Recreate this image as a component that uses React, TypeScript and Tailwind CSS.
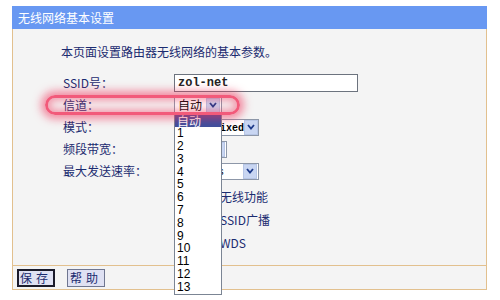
import React from 'react';

const cjk = "font-['Noto_Sans_CJK_SC',sans-serif]";
const mono = "font-['Liberation_Mono',monospace]";

function Arrow() {
  return (
    <span className="flex h-[15px] w-[14px] shrink-0 items-center justify-center border border-[#b7c6e6] bg-[#c9d6f2]">
      <svg width="8" height="6" viewBox="0 0 8 6">
        <path d="M1 1 L4 4.5 L7 1" fill="none" stroke="#1d3a8a" strokeWidth="1.8" />
      </svg>
    </span>
  );
}

function Select({ width, children }: { width: string; children?: React.ReactNode }) {
  return (
    <div className={`flex h-[17px] items-center justify-between border border-[#8d97a8] bg-white pl-[3px] pr-px ${width}`}>
      <span className="whitespace-nowrap leading-[14px]">{children}</span>
      <Arrow />
    </div>
  );
}

function Row({ label, children }: { label?: string; children?: React.ReactNode }) {
  return (
    <div className="flex h-[22px] items-center">
      <div className="w-[113px] pl-[2px] text-[#1b2b70]">{label}</div>
      <div className="flex items-center">{children}</div>
    </div>
  );
}

const channels = ['1', '2', '3', '4', '5', '6', '7', '8', '9', '10', '11', '12', '13'];

export default function App() {
  return (
    <div className={`relative h-[300px] w-[500px] overflow-hidden bg-white text-[12px] ${cjk}`}>
      <div className="ml-[12px] mt-[6px] w-[475px]">
        <div className="flex h-[23px] items-center bg-[#6898f2] pl-[6px] text-white">无线网络基本设置</div>
        <div className="h-[236px] border-x border-[#e2c08e] bg-[#f4f4f4]">
          <div className="pl-[48px] pt-[15px] leading-[16px] text-[#1b2b70]">本页面设置路由器无线网络的基本参数。</div>
          <div className="pl-[48px] pt-[12px]">
            <Row label="SSID号：">
              <div className={`flex h-[18px] w-[184px] items-center border border-[#6c737e] bg-white pl-[3px] ${mono} text-[12px] font-bold text-[#222]`}>zol-net</div>
            </Row>
            <Row label="信道：">
              <div className="relative">
                <Select width="w-[48px]">自动</Select>
                <div className="absolute left-0 top-[17px] z-10 w-[48px] border border-[#7b8594] bg-white font-['Liberation_Sans',sans-serif] text-[12px] text-black">
                  <div className={`h-[12.8px] bg-[#3d4f9e] pl-[2px] leading-[12.8px] text-white ${cjk}`}>自动</div>
                  {channels.map((c) => (
                    <div key={c} className="h-[12.8px] pl-[2px] leading-[12.8px]">{c}</div>
                  ))}
                </div>
              </div>
            </Row>
            <Row label="模式：">
              <Select width="w-[85px]"><span className={`${mono} text-[10px] font-bold`}>11bgn mixed</span></Select>
            </Row>
            <Row label="频段带宽：">
              <Select width="w-[53px]">自动</Select>
            </Row>
            <Row label="最大发送速率：">
              <Select width="w-[85px]"><span className={`${mono} text-[11px]`}>300Mbps</span></Select>
            </Row>
            <div className="mt-[3px]">
              {['开启无线功能', '开启SSID广播', '开启WDS'].map((t) => (
                <div key={t} className="flex h-[23px] items-center pl-[115px] text-[#1b2b70]">
                  <span className="mr-[2px] h-[12px] w-[12px] border border-[#1c5180] bg-white" />
                  <span className="ml-[6px]">{t}</span>
                </div>
              ))}
            </div>
          </div>
        </div>
        <div className="flex h-[25px] items-center gap-[12px] border border-[#e2c08e] bg-[#f4f4f4] pl-[4px]">
          <button className="flex h-[18px] w-[38px] items-center justify-center border-2 border-[#1a1a2a] bg-[#dfe1f3] text-[12px] tracking-[4px] text-[#1b2b70]">保存</button>
          <button className="flex h-[18px] w-[38px] items-center justify-center border border-[#6f7690] bg-[#dfe1f3] text-[12px] tracking-[4px] text-[#1b2b70]">帮助</button>
        </div>
      </div>
      <div className="pointer-events-none absolute left-[45px] top-[95px] z-20 h-[20px] w-[195px] rounded-full border-[3px] border-[#f25a7a] shadow-[0_0_8px_4px_rgba(240,50,90,0.55),inset_0_0_7px_3px_rgba(240,50,90,0.45)]" />
    </div>
  );
}
